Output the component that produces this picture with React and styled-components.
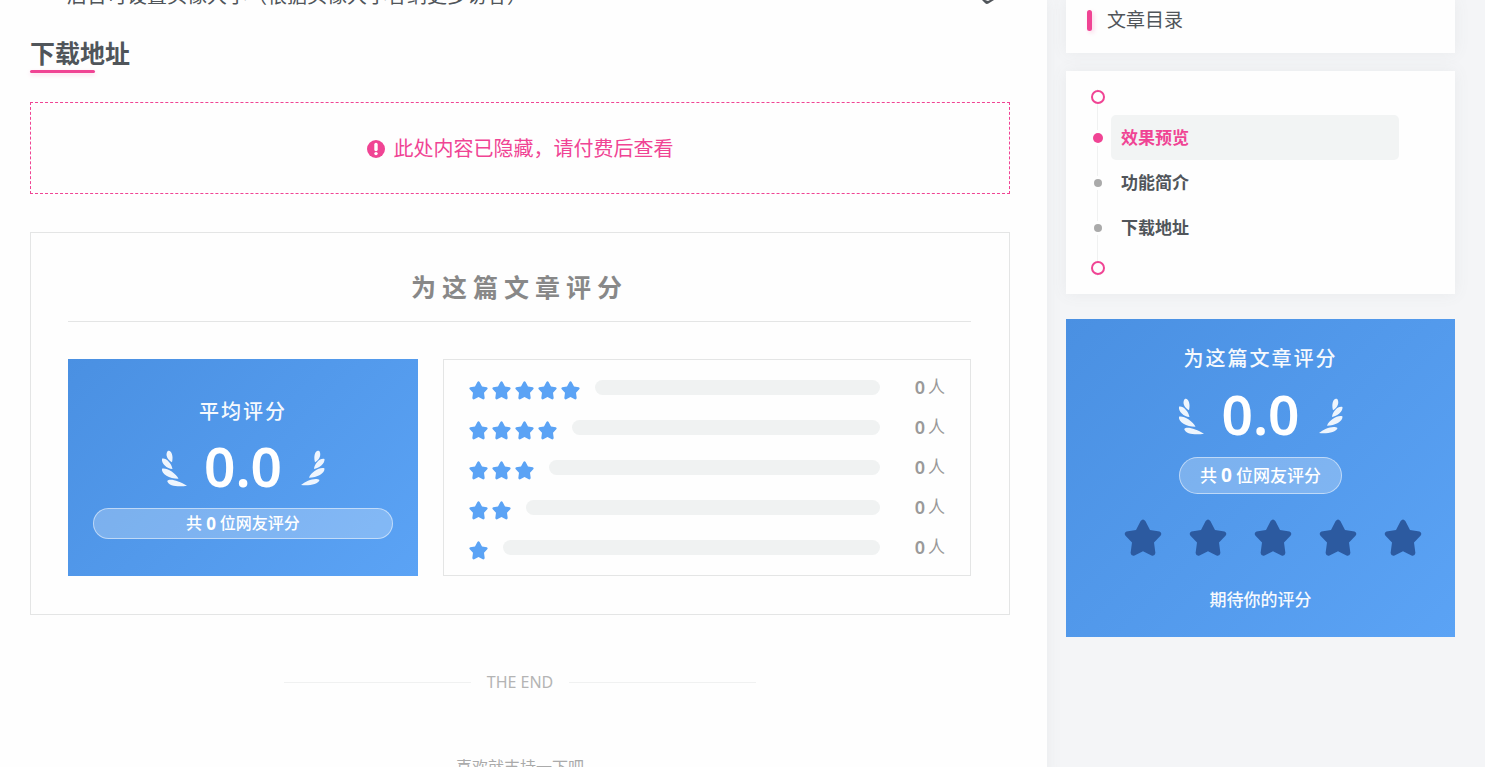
// Import Dependencies
import React from 'react';
import styled, { createGlobalStyle } from 'styled-components';

const GlobalStyle = createGlobalStyle`
*, *::before, *::after {
box-sizing: border-box;
}

body {
margin: 0;
background: #f4f5f7;
color: #50555a;
font-family: "Noto Sans", "Noto Sans CJK SC", sans-serif;
font-size: 16px;
}

#root {
height: 100vh;
overflow: hidden;
}

h2, h3, p, ul, ol {
margin: 0;
padding: 0;
}

ul, ol {
list-style: none;
}
`;

// Layout
const Page = styled.div`
display: flex;
align-items: stretch;
min-height: 100%;
`;

const Article = styled.main`
flex: 1;
min-width: 0;
padding: 0 37px 0 30px;
background: #fefefe;
box-shadow: 0 0 15px rgba(100, 110, 120, 0.08);
`;

const Sidebar = styled.aside`
width: 438px;
padding: 0 30px 0 19px;
`;

// Article
const FeatureRow = styled.div`
display: flex;
justify-content: space-between;
height: 8px;
padding: 0 8px 0 37px;
`;

const FeatureText = styled.p`
margin-top: -18px;
font-size: 20px;
line-height: 28px;
`;

const SectionHeading = styled.h2`
width: max-content;
margin-top: 29px;
font-size: 25px;
line-height: 33px;
font-weight: 600;

&::after {
content: "";
display: block;
width: 65px;
height: 3px;
border-radius: 2px;
background: #f04494;
box-shadow: 0 2px 4px rgba(240, 68, 148, 0.2);
}
`;

const HiddenNotice = styled.div`
display: flex;
align-items: center;
justify-content: center;
gap: 9px;
height: 92px;
margin-top: 29px;
padding-top: 2px;
border: 1px dashed #f04494;
color: #f04494;
font-size: 20px;
line-height: 28px;
`;

const RatingBox = styled.section`
margin-top: 38px;
padding: 37px 38px 38px 37px;
border: 1px solid #e4e5e5;
`;

const RatingTitle = styled.h3`
padding-bottom: 17px;
border-bottom: 1px solid #e4e5e5;
color: #888;
font-size: 25px;
line-height: 34px;
font-weight: 600;
letter-spacing: 6px;
text-align: center;
`;

const RatingGrid = styled.div`
display: grid;
grid-template-columns: 350fr 528fr;
gap: 25px;
margin-top: 37px;
`;

const BluePanel = styled.div`
display: flex;
flex-direction: column;
align-items: ${(props) => (props.$stretch ? 'stretch' : 'center')};
padding: ${(props) => (props.$stretch ? '38px 25px 37px' : '25px 0 23px')};
margin-top: ${(props) => (props.$stretch ? '0' : '25px')};
background: linear-gradient(135deg, #4a90e2, #5ba3f5);
color: #fff;
text-align: center;
`;

const PanelTitle = styled.p`
font-size: 20px;
line-height: 30px;
font-weight: 500;
letter-spacing: 2px;
opacity: 0.95;
`;

const ScoreRow = styled.div`
display: flex;
align-items: center;
justify-content: center;
gap: 17px;
height: ${(props) => (props.$tall ? '83px' : '81px')};
`;

const Score = styled.span`
padding-bottom: 3px;
font-size: 55px;
line-height: 60px;
font-weight: 600;
`;

const Pill = styled.p`
display: flex;
align-items: center;
justify-content: center;
gap: 4px;
padding: 0 20px;
border: 1px solid rgba(255, 255, 255, 0.5);
border-radius: 20px;
background: rgba(255, 255, 255, 0.25);
font-size: ${(props) => (props.$large ? '17px' : '16px')};
line-height: ${(props) => (props.$large ? '35px' : '29px')};
font-weight: 500;
`;

const PillCount = styled.b`
font-size: ${(props) => (props.$large ? '19px' : '17px')};
`;

const Breakdown = styled.ul`
display: flex;
flex-direction: column;
gap: 10px;
padding: 12px 25px;
border: 1px solid #e4e5e5;
`;

const BreakdownRow = styled.li`
display: flex;
align-items: center;
height: 30px;
`;

const SmallStars = styled.span`
display: flex;
gap: 4px;
padding-top: 6px;
margin-right: 15px;
color: #5ba3f5;
`;

const Track = styled.span`
flex: 1;
height: 15px;
border-radius: 8px;
background: #f0f2f2;
`;

const Voters = styled.span`
display: flex;
align-items: center;
justify-content: flex-end;
gap: 3px;
width: 65px;
color: #999;
font-size: 17px;
line-height: 24px;
`;

const VoterCount = styled.b`
font-size: 18px;
font-weight: 600;
`;

const EndDivider = styled.div`
display: flex;
align-items: center;
gap: 16px;
width: 472px;
max-width: 100%;
margin: 55px auto 0;
color: #b4b4b4;
font-size: 16px;
line-height: 24px;

&::before, &::after {
content: "";
flex: 1;
height: 1px;
background: #f0f1f1;
}
`;

const SupportText = styled.p`
margin-top: 61px;
color: #aaa;
font-size: 16px;
line-height: 24px;
text-align: center;
`;

// Sidebar
const CatalogHeader = styled.div`
display: flex;
align-items: flex-start;
gap: 15px;
height: 53px;
padding: 6px 21px;
background: #fefefe;
box-shadow: 0 0 15px rgba(100, 110, 120, 0.08);
font-size: 19px;
line-height: 28px;

&::before {
content: "";
width: 5px;
height: 21px;
margin-top: 4px;
border-radius: 3px;
background: #f04494;
box-shadow: 2px 2px 4px rgba(240, 68, 148, 0.2);
}
`;

const Catalog = styled.nav`
margin-top: 18px;
padding: 18px 56px 18px 25px;
background: #fefefe;
box-shadow: 0 0 15px rgba(100, 110, 120, 0.08);
`;

const CatalogList = styled.ol`
background: linear-gradient(#f0f1f1, #f0f1f1) 6px 0 / 1px 100% no-repeat;
`;

const CatalogEnd = styled.li`
display: flex;
align-items: ${(props) => (props.$last ? 'flex-end' : 'flex-start')};
height: 26px;

&::before {
content: "";
width: 14px;
height: 14px;
margin: ${(props) => (props.$last ? '0 0 1px' : '1px 0 0')};
border: 2px solid #f04494;
border-radius: 50%;
background: #fefefe;
}
`;

const CatalogItem = styled.li`
display: flex;
align-items: center;
gap: 6px;
height: 45px;
`;

const Dot = styled.span`
display: flex;
justify-content: center;
width: 14px;
padding: 3px 0;
background: #fefefe;

&::before {
content: "";
width: ${(props) => (props.$active ? '10px' : '8px')};
height: ${(props) => (props.$active ? '10px' : '8px')};
border-radius: 50%;
background: ${(props) => (props.$active ? '#f04494' : '#aaa')};
}
`;

const CatalogLink = styled.a`
flex: 1;
padding: 0 10px;
border-radius: 5px;
background: ${(props) => (props.$active ? '#f2f4f4' : 'transparent')};
color: ${(props) => (props.$active ? '#f04494' : '#50555a')};
font-size: 17px;
line-height: 45px;
font-weight: 600;
text-decoration: none;
`;

const StarPicker = styled.div`
display: flex;
gap: 27px;
padding: 25px 0 0 24px;
`;

const StarButton = styled.button`
display: block;
padding: 0;
border: none;
background: none;
color: #2c5aa0;
line-height: 0;
cursor: pointer;
`;

const Hint = styled.p`
margin-top: 29px;
font-size: 17px;
line-height: 28px;
font-weight: 500;
opacity: 0.95;
`;

function Star({ size }) {
  return (
    <svg width={size} height={size} viewBox="0 0 38 38" fill="currentColor" aria-hidden="true">
      <path d="M16.5 2.3Q19 -1.2 21.500 2.300L26 11L35.500 12.400Q38.500 14 36.500 16.700L30 23.500L31.400 34Q30.800 37.500 27.500 36.600L19 32.200L10.500 36.600Q7.200 37.500 6.600 34L8 23.500L1.500 16.700Q-.5 14 2.500 12.400L12 11Z" />
    </svg>
  );
}

function Laurel({ side }) {
  return (
    <svg width="26" height="38" viewBox="0 0 26 38" fill="#fff" fillOpacity="0.9" aria-hidden="true">
      {side === 'left' ? (
        <path d="M6.500 2.300C9.500 0 13 6 11 13.300C6.500 11 4 6 6.500 2.300ZM1 9.800C4.500 8.500 10.500 14 11.500 20C6 20 0 14.500 1 9.800ZM1 19.800C4 18 15 23.500 17.500 29.800C9 30 0 25 1 19.800ZM6.200 32C8.500 29 18 32 26 36.800C18 38 7.500 37.500 6.200 32Z" />
      ) : (
        <path d="M20.500 2.300C17 0 14 6 16 13.300C20.500 11 22.500 6 20.500 2.300ZM25.500 10C21.500 8.500 15.500 14 15 20C20 19.500 26 14.500 25.500 10ZM25.500 19.500C21.500 17.500 12 23 10 28.800C18 28.500 26 24.500 25.500 19.500ZM20.500 31C17 28 7 31.500 2 36C10 36.800 19.500 35.500 20.500 31Z" />
      )}
    </svg>
  );
}

function ScoreLine({ tall }) {
  return (
    <ScoreRow $tall={tall}>
      <Laurel side="left" />
      <Score>0.0</Score>
      <Laurel side="right" />
    </ScoreRow>
  );
}

function VoteTotal({ large }) {
  return (
    <Pill $large={large}>
      <span>共</span>
      <PillCount $large={large}>0</PillCount>
      <span>位网友评分</span>
    </Pill>
  );
}

const levels = [5, 4, 3, 2, 1];
const sections = ['效果预览', '功能简介', '下载地址'];

export default function App() {
  return (
    <>
      <GlobalStyle />
      <Page>
        <Article>
          <FeatureRow>
            <FeatureText>后台可设置头像大小（根据头像大小容纳更多访客）</FeatureText>
            <svg width="20" height="8" viewBox="0 0 20 8" aria-hidden="true">
              <path d="M0 0L3 3Q5 5 8 2.500L12 0" fill="#50555a" />
              <path d="M3 0L6 1L8 0" fill="#fefefe" />
            </svg>
          </FeatureRow>
          <SectionHeading>下载地址</SectionHeading>

          <HiddenNotice>
            <svg width="18" height="18" viewBox="0 0 18 18" aria-hidden="true">
              <circle cx="9" cy="9" r="9" fill="#f04494" />
              <path d="M9 4.500V9.500" stroke="#fff" strokeWidth="3.400" strokeLinecap="round" />
              <circle cx="9" cy="13.600" r="1.700" fill="#fff" />
            </svg>
            <span>此处内容已隐藏，请付费后查看</span>
          </HiddenNotice>

          <RatingBox>
            <RatingTitle>为这篇文章评分</RatingTitle>
            <RatingGrid>
              <BluePanel $stretch>
                <PanelTitle>平均评分</PanelTitle>
                <ScoreLine />
                <VoteTotal />
              </BluePanel>
              <Breakdown>
                {levels.map((level) => (
                  <BreakdownRow key={level}>
                    <SmallStars>
                      {Array.from({ length: level }, (_, i) => <Star key={i} size={19} />)}
                    </SmallStars>
                    <Track />
                    <Voters><VoterCount>0</VoterCount>人</Voters>
                  </BreakdownRow>
                ))}
              </Breakdown>
            </RatingGrid>
          </RatingBox>

          <EndDivider>THE END</EndDivider>
          <SupportText>喜欢就支持一下吧</SupportText>
        </Article>

        <Sidebar>
          <CatalogHeader>文章目录</CatalogHeader>
          <Catalog aria-label="文章目录">
            <CatalogList>
              <CatalogEnd />
              {sections.map((name, i) => (
                <CatalogItem key={name}>
                  <Dot $active={i === 0} />
                  <CatalogLink href={`#section-${i}`} $active={i === 0}>{name}</CatalogLink>
                </CatalogItem>
              ))}
              <CatalogEnd $last />
            </CatalogList>
          </Catalog>

          <BluePanel>
            <PanelTitle>为这篇文章评分</PanelTitle>
            <ScoreLine tall />
            <VoteTotal large />
            <StarPicker>
              {[1, 2, 3, 4, 5].map((n) => (
                <StarButton key={n} type="button" aria-label={`${n} 星`}>
                  <Star size={38} />
                </StarButton>
              ))}
            </StarPicker>
            <Hint>期待你的评分</Hint>
          </BluePanel>
        </Sidebar>
      </Page>
    </>
  );
}
